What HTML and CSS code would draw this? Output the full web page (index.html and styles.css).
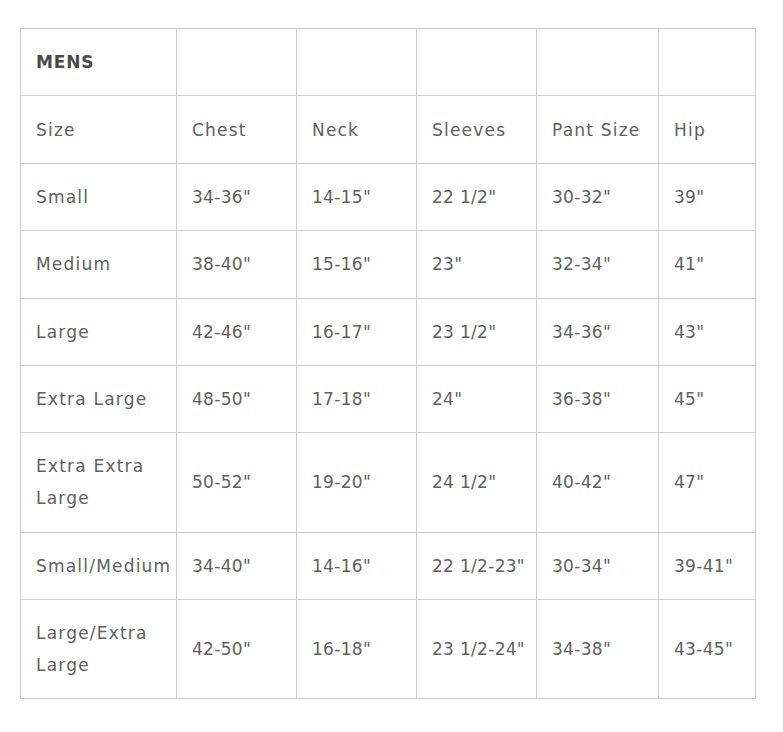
FILE: index.html
```html
<!DOCTYPE html>
<html>
<head>
<meta charset="utf-8">
<link rel="stylesheet" href="styles.css">
</head>
<body>
<table class="size-table">
  <colgroup>
    <col class="c1"><col class="c2"><col class="c3"><col class="c4"><col class="c5"><col class="c6">
  </colgroup>
  <tbody>
    <tr><td class="title">MENS</td><td></td><td></td><td></td><td></td><td></td></tr>
    <tr class="head"><td>Size</td><td>Chest</td><td>Neck</td><td>Sleeves</td><td>Pant Size</td><td>Hip</td></tr>
    <tr><td>Small</td><td>34-36"</td><td>14-15"</td><td>22 1/2"</td><td>30-32"</td><td>39"</td></tr>
    <tr><td>Medium</td><td>38-40"</td><td>15-16"</td><td>23"</td><td>32-34"</td><td>41"</td></tr>
    <tr><td>Large</td><td>42-46"</td><td>16-17"</td><td>23 1/2"</td><td>34-36"</td><td>43"</td></tr>
    <tr><td>Extra Large</td><td>48-50"</td><td>17-18"</td><td>24"</td><td>36-38"</td><td>45"</td></tr>
    <tr><td>Extra Extra Large</td><td>50-52"</td><td>19-20"</td><td>24 1/2"</td><td>40-42"</td><td>47"</td></tr>
    <tr><td>Small/Medium</td><td>34-40"</td><td>14-16"</td><td>22 1/2-23"</td><td>30-34"</td><td>39-41"</td></tr>
    <tr><td>Large/Extra Large</td><td>42-50"</td><td>16-18"</td><td>23 1/2-24"</td><td>34-38"</td><td>43-45"</td></tr>
  </tbody>
</table>
</body>
</html>
```
FILE: styles.css
```css
body {
  margin: 0;
  padding: 28px 0 0 20px;
  background: #fff;
  font-family: "DejaVu Sans", sans-serif;
}
.size-table {
  border-collapse: collapse;
  table-layout: fixed;
  width: 735px;
  color: #606060;
  font-size: 17px;
  line-height: 32px;
  letter-spacing: 1.2px;
}
.c1 { width: 156px; }
.c2 { width: 120px; }
.c3 { width: 120px; }
.c4 { width: 120px; }
.c5 { width: 122px; }
.c6 { width: 97px; }
.size-table td {
  border: 1px solid #cfcfcf;
  padding: 17.2px 0 17.2px 15px;
  vertical-align: middle;
  height: 32px;
  font-weight: 400;
}
.size-table tr:nth-child(n+3) td:not(:first-child) {
  letter-spacing: 0.3px;
}
.size-table td.title {
  font-weight: bold;
  color: #4a4a4a;
  letter-spacing: 0.8px;
}
```
